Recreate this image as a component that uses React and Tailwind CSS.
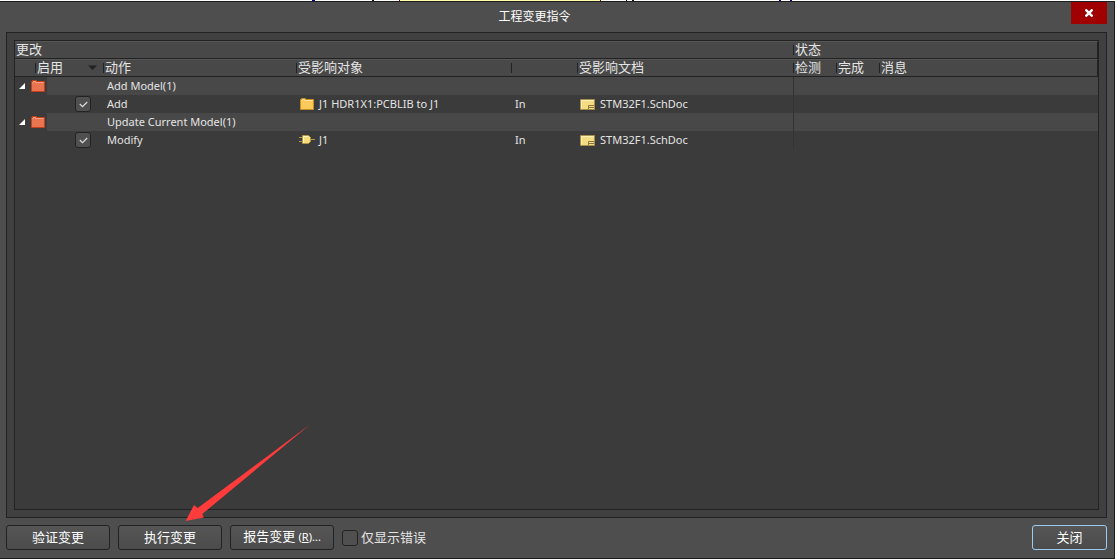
import React, { useState } from 'react';
import clsx from 'clsx';

const GROUPS = [
  {
    id: 'add-model',
    label: 'Add Model(1)',
    items: [
      { id: 'add-j1', action: 'Add', icon: 'library', object: 'J1 HDR1X1:PCBLIB to J1', relation: 'In', doc: 'STM32F1.SchDoc' },
    ],
  },
  {
    id: 'update-model',
    label: 'Update Current Model(1)',
    items: [
      { id: 'modify-j1', action: 'Modify', icon: 'part', object: 'J1', relation: 'In', doc: 'STM32F1.SchDoc' },
    ],
  },
];

export default function App() {
  const [open, setOpen] = useState({ 'add-model': true, 'update-model': true });
  const toggle = (id) => setOpen((o) => ({ ...o, [id]: !o[id] }));

  return (
    <div className="flex min-h-screen flex-col bg-[#fdfdfb] pr-[2px] pb-px font-['Noto_Sans','Noto_Sans_CJK_SC',sans-serif] text-[13px] text-[#e4e4e4]">
      <SheetEdge />
      <main className="flex flex-1 flex-col border-y border-r border-[#1c1c1c] bg-[#4e4e4e]">
        <header className="flex h-[30px] items-start pr-[7px]">
          <h1 className="flex-1 pt-1 pr-[2px] text-center text-[12px] leading-[22px] text-white">工程变更指令</h1>
          <button aria-label="关闭窗口" className="flex h-[22px] w-9 items-center justify-center bg-[#a00000]">
            <svg width="8" height="8" viewBox="0 0 8 8" stroke="#fff" strokeWidth="2.4">
              <path d="M0.5 0.5 7.5 7.5M7.5 0.5 0.5 7.5" />
            </svg>
          </button>
        </header>

        <section className="mr-[7px] ml-[6px] flex flex-1 flex-col border border-[#222] bg-[#404040] p-[7px]">
          <div className="flex-1 border border-[#222] bg-[#3b3b3b]">
            <ChangeTable open={open} onToggle={toggle} />
          </div>
        </section>

        <footer className="mr-[7px] ml-[6px] flex items-center gap-2 pt-[7px] pb-2">
          <DialogButton>验证变更</DialogButton>
          <div className="relative">
            <DialogButton>执行变更</DialogButton>
            <Pointer />
          </div>
          <DialogButton>
            报告变更 <span className="text-[11px]">(<u>R</u>)...</span>
          </DialogButton>
          <label className="flex items-center gap-[3px]">
            <CheckBox />
            仅显示错误
          </label>
          <DialogButton className="ml-auto w-[75px] border-[#9ccbf0]">关闭</DialogButton>
        </footer>
      </main>
    </div>
  );
}

function ChangeTable({ open, onToggle }) {
  return (
    <table className="w-full table-fixed border-separate border-spacing-0 text-left">
      <colgroup>
        <col className="w-5" />
        <col className="w-[68px]" />
        <col className="w-[193px]" />
        <col className="w-[215px]" />
        <col className="w-[66px]" />
        <col className="w-[216px]" />
        <col className="w-[43px]" />
        <col className="w-[43px]" />
        <col />
      </colgroup>
      <thead className="bg-[#484848]">
        <tr>
          <HeadCell colSpan={6} tick={false}>更改</HeadCell>
          <HeadCell colSpan={3} last>状态</HeadCell>
        </tr>
        <tr>
          <HeadCell tick={false} />
          <HeadCell>
            启用
            <svg className="mr-[6px] ml-auto" width="9" height="5" viewBox="0 0 9 5">
              <path d="M0 0.5h9L4.5 5z" fill="#222" />
            </svg>
          </HeadCell>
          <HeadCell>动作</HeadCell>
          <HeadCell>受影响对象</HeadCell>
          <HeadCell />
          <HeadCell>受影响文档</HeadCell>
          <HeadCell>检测</HeadCell>
          <HeadCell>完成</HeadCell>
          <HeadCell last>消息</HeadCell>
        </tr>
      </thead>
      <tbody className="text-[11px]">
        {GROUPS.map((g) => (
          <React.Fragment key={g.id}>
            <tr className="bg-[#484848]">
              <td colSpan={2} className="p-0">
                <div className="flex h-[18px] w-8 items-center gap-[6px] bg-[#3b3b3b] pl-1">
                  <button aria-label={g.label} aria-expanded={open[g.id]} onClick={() => onToggle(g.id)}>
                    <svg className={clsx('block', !open[g.id] && '-rotate-45')} width="6" height="6" viewBox="0 0 6 6">
                      <path d="M6 0v6H0z" fill="#fff" />
                    </svg>
                  </button>
                  <FolderIcon fill="#e8754f" light="#f2a084" edge="#c2401a" />
                </div>
              </td>
              <BodyCell colSpan={4}>{g.label}</BodyCell>
              <StatusCells />
            </tr>
            {open[g.id] && g.items.map((it) => (
              <tr key={it.id}>
                <td className="p-0" />
                <td className="p-0">
                  <div className="flex justify-end pr-3">
                    <CheckBox defaultChecked label={it.action} />
                  </div>
                </td>
                <BodyCell>{it.action}</BodyCell>
                <BodyCell>
                  {it.icon === 'library' ? <FolderIcon fill="#fbc95c" light="#ffe09a" edge="#c58f22" /> : <PartIcon />}
                  {it.object}
                </BodyCell>
                <BodyCell>{it.relation}</BodyCell>
                <BodyCell inset="pl-[3px]">
                  <DocIcon />
                  {it.doc}
                </BodyCell>
                <StatusCells />
              </tr>
            ))}
          </React.Fragment>
        ))}
      </tbody>
    </table>
  );
}

function HeadCell({ children, colSpan, tick = true, last = false }) {
  return (
    <th
      colSpan={colSpan}
      className={clsx('border-t border-b border-t-[#565656] border-b-[#222] p-0 font-normal', last && 'border-r border-r-[#222]')}
    >
      <div className="flex h-4 items-center whitespace-nowrap">
        {tick && <span className="h-[10px] w-px bg-[#222]" />}
        <span className="flex flex-1 items-center pb-[2px] pl-px leading-4">{children}</span>
      </div>
    </th>
  );
}

function BodyCell({ children, colSpan, inset = 'pl-1' }) {
  return (
    <td colSpan={colSpan} className="p-0">
      <div className={clsx('flex h-[18px] items-center gap-1 whitespace-nowrap', inset)}>{children}</div>
    </td>
  );
}

function StatusCells() {
  return (
    <>
      <td className="border-l border-[#333] p-0" />
      <td className="p-0" />
      <td className="p-0" />
    </>
  );
}

function CheckBox({ label, defaultChecked = false }) {
  return (
    <span className="grid place-items-center">
      <input
        type="checkbox"
        aria-label={label}
        defaultChecked={defaultChecked}
        className="peer col-start-1 row-start-1 size-4 appearance-none rounded-[3px] border border-[#222] bg-[#505050]"
      />
      <svg
        className="pointer-events-none invisible col-start-1 row-start-1 peer-checked:visible"
        width="9" height="7" viewBox="0 0 9 7" fill="none" stroke="#dcdcdc" strokeWidth="1.2"
      >
        <path d="M0.8 3 3.5 5.7 8.2 1" />
      </svg>
    </span>
  );
}

function DialogButton({ children, className = 'w-[104px] border-[#222]' }) {
  return (
    <button className={clsx('block h-[25px] rounded-[3px] border bg-linear-to-b from-[#565656] to-[#4b4b4b] pb-[2px] leading-5 whitespace-nowrap text-white', className)}>
      {children}
    </button>
  );
}

function FolderIcon({ fill, light, edge }) {
  return (
    <svg className="shrink-0" width="15" height="12" viewBox="0 0 15 12">
      <path d="M0.5 1.5h1v-1h4v1h8v10h-13z" fill={fill} stroke={edge} />
      <path d="M1.5 2.5h1v-1h2v1h8" fill="none" stroke={light} />
    </svg>
  );
}

function PartIcon() {
  return (
    <svg className="-ml-px shrink-0" width="16" height="10" viewBox="0 0 16 10">
      <path d="M0 2.5h4M0 6.5h4M11 4.5h5" stroke="#b29545" />
      <path d="M3.5 0.5h6l2 2v4l-2 2h-6z" fill="#f5dc7c" stroke="#b29545" />
      <path d="M4.5 8V1.5h5" fill="none" stroke="#fff3bd" />
    </svg>
  );
}

function DocIcon() {
  return (
    <svg className="mr-px shrink-0" width="15" height="11" viewBox="0 0 15 11">
      <path d="M0.5 0.5h14v10h-14z" fill="#f4dc83" stroke="#a68d4b" />
      <path d="M1.5 9.5v-8h12" fill="none" stroke="#fff0b6" />
      <path d="M8.5 10V6.5H14M9 8.5h5" fill="none" stroke="#8d7740" />
      <path d="M9 7.5h5M9 9.5h5" stroke="#f4dc83" />
    </svg>
  );
}

// Red arrow aimed at the execute button
function Pointer() {
  return (
    <svg
      className="pointer-events-none absolute bottom-full left-[67px] mb-[3px]"
      width="126" height="98" viewBox="0 0 126 98" fill="#ff3b3b"
    >
      <path d="M0.7 97 9 81 12.7 84 125.4 0.2 17.3 90 18.8 93.5z" />
    </svg>
  );
}

// Sliver of the schematic sheet that shows above the dialog
function SheetEdge() {
  return (
    <svg className="block h-px w-full" viewBox="0 0 1115 1" preserveAspectRatio="none" shapeRendering="crispEdges">
      <path d="M400 0h200v1H400z" fill="#ffffa8" />
      <path d="M312 0h3v1h-3zM779 0h2v1h-2zM790 0h2v1h-2z" fill="#000090" />
      <path d="M372 0h2v1h-2zM626 0h1v1h-1zM632 0h2v1h-2z" fill="#111" />
      <path d="M399 0h1v1h-1zM600 0h1v1h-1z" fill="#800000" />
    </svg>
  );
}
